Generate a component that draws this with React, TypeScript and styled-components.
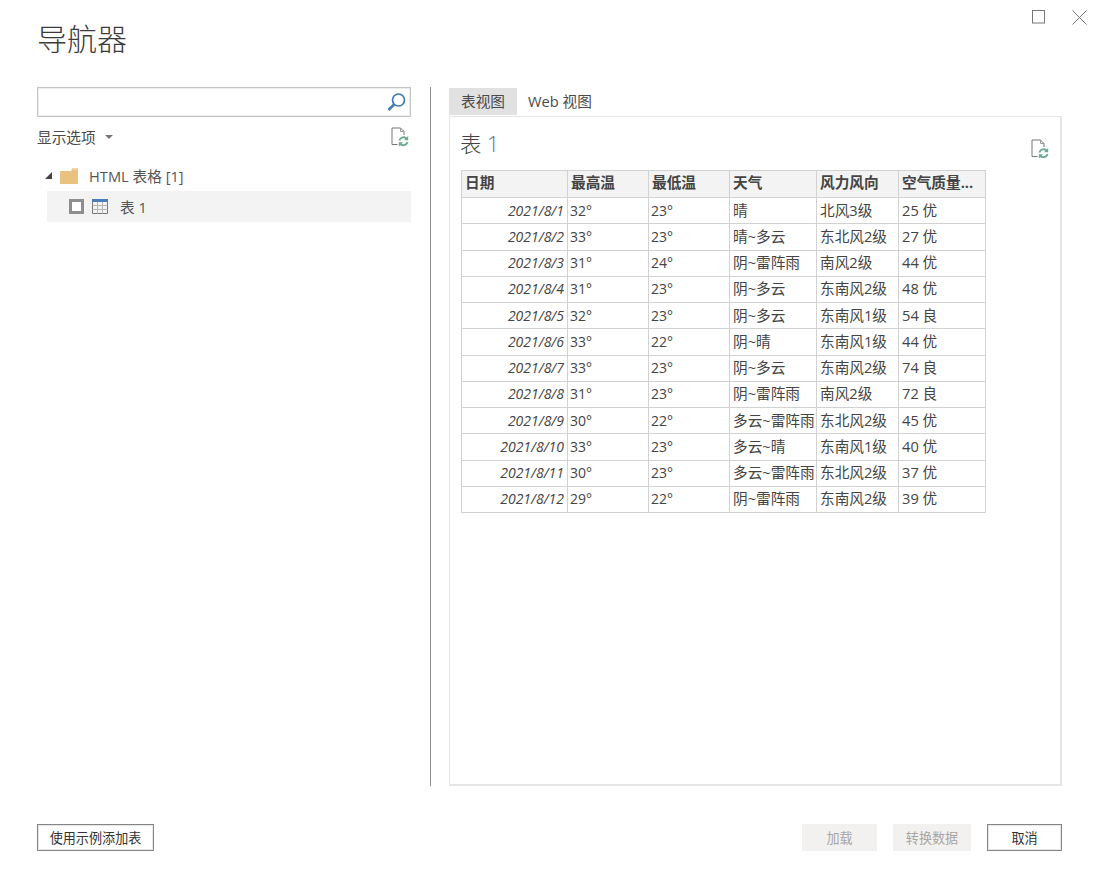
import styled, { createGlobalStyle } from "styled-components";

const GlobalStyle = createGlobalStyle`
  html, body {
    margin: 0;
    padding: 0;
    background: #fff;
  }
  * {
    box-sizing: border-box;
  }
`;

const Page = styled.div`
  width: 1099px;
  height: 874px;
  display: flex;
  flex-direction: column;
  padding: 0 37px 23px 37px;
  background: #fff;
  color: #444;
  font-family: "Open Sans", "Noto Sans CJK SC", sans-serif;
  font-size: 14.67px;
  overflow: hidden;
`;

const Header = styled.header`
  height: 87px;
  margin-right: -25px;
  display: flex;
  justify-content: space-between;
  align-items: flex-start;
`;

const Heading = styled.h1`
  margin: 17px 0 0;
  font-size: 30px;
  line-height: 44px;
  font-weight: 300;
  color: #3c3c3c;
`;

const WindowControls = styled.div`
  display: flex;
  gap: 27px;
  padding-top: 10px;
`;

const Body = styled.div`
  flex: 1;
  display: flex;
  min-height: 0;
`;

const LeftPane = styled.div`
  width: 374px;
  display: flex;
  flex-direction: column;
`;

const Divider = styled.div`
  width: 1px;
  height: 699px;
  margin: 0 18px 0 19px;
  background: #8c8c8c;
`;

const RightPane = styled.div`
  width: 613px;
  height: 699px;
  display: flex;
  flex-direction: column;
`;

const SearchBox = styled.div`
  height: 30px;
  display: flex;
  align-items: center;
  justify-content: flex-end;
  padding-right: 3px;
  border: 1px solid #c4c4c4;
  box-shadow: inset 0 0 0 1px #ececec;
`;

const OptionsRow = styled.div`
  height: 40px;
  display: flex;
  align-items: center;
  justify-content: space-between;
  padding-right: 2px;
`;

const OptionsLabel = styled.span`
  display: flex;
  align-items: center;
  gap: 9px;
  line-height: 20px;
  color: #4a4a4a;
`;

const Caret = styled.i`
  width: 0;
  height: 0;
  border-left: 4px solid transparent;
  border-right: 4px solid transparent;
  border-top: 4px solid #777;
`;

const Tree = styled.div`
  margin-top: 7px;
  margin-left: 10px;
`;

const FolderRow = styled.div`
  height: 27px;
  padding-bottom: 4px;
  display: flex;
  align-items: center;
  color: #555;
`;

const Expander = styled.i`
  width: 0;
  height: 0;
  margin-right: 8px;
  margin-left: -2px;
  border-style: solid;
  border-width: 0 0 7px 7px;
  border-color: transparent transparent #444 transparent;
`;

const FolderLabel = styled.span`
  margin-left: 11px;
  line-height: 20px;
`;

const TableRow = styled.div`
  height: 31px;
  display: flex;
  align-items: center;
  padding-left: 22px;
  background: #f3f3f3;
`;

const CheckBox = styled.i`
  width: 15px;
  height: 15px;
  border: 3px solid #8e8e8e;
  background: #fff;
`;

const TableLabel = styled.span`
  margin-left: 12px;
  line-height: 20px;
  color: #555;
`;

const Tabs = styled.div`
  height: 29px;
  display: flex;
  padding-top: 1px;
`;

const Tab = styled.div<{ $active?: boolean }>`
  height: 27px;
  padding: 0 12px 2px;
  display: flex;
  align-items: center;
  background: ${(props) => (props.$active ? "#e1e1e1" : "transparent")};
  color: #4a4a4a;
  & + & {
    margin-left: -1px;
  }
`;

const Preview = styled.div`
  flex: 1;
  padding: 0 10px;
  border: 2px solid #e6e6e6;
  border-width: 1px 2px 2px 1px;
`;

const PreviewHead = styled.div`
  height: 53px;
  display: flex;
  justify-content: space-between;
  align-items: flex-start;
  padding-right: 1px;
`;

const PreviewTitle = styled.div`
  margin-top: 11px;
  font-size: 21.5px;
  line-height: 32px;
  font-weight: 300;
  color: #444;
`;

const PreviewNumber = styled.span`
  color: #5b6f8d;
`;

const RefreshSlot = styled.div`
  margin-top: 22px;
`;

const Grid = styled.table`
  margin-left: 1px;
  border-collapse: collapse;
  table-layout: fixed;
  width: 524px;
  border: 1px solid #d2d2d2;
`;

const HeadCell = styled.th<{ $w: number }>`
  width: ${(props) => props.$w}px;
  height: 27px;
  padding: 0 2px 5px 3px;
  border: 1px solid #d2d2d2;
  background: #f3f3f3;
  text-align: left;
  font-size: 14.67px;
  font-weight: 700;
  color: #444;
  white-space: nowrap;
  overflow: hidden;
`;

const Cell = styled.td<{ $small?: boolean }>`
  height: 26.25px;
  padding: ${(props) => (props.$small ? "0 3px 0 2px" : "0 3px 2px 3px")};
  border: 1px solid #d2d2d2;
  font-size: ${(props) => (props.$small ? "14px" : "14.67px")};
  line-height: 18px;
  color: #444;
  white-space: nowrap;
  overflow: hidden;
`;

const DateCell = styled(Cell)`
  padding: 0 3px;
  text-align: right;
  font-style: italic;
  font-size: 14px;
`;

const Footer = styled.footer`
  height: 27px;
  margin-top: 38px;
  display: flex;
  justify-content: space-between;
`;

const ActionGroup = styled.div`
  display: flex;
  gap: 16px;
`;

const Button = styled.button<{ $w: number }>`
  width: ${(props) => props.$w}px;
  height: 27px;
  padding: 0;
  background: #fff;
  border: 1px solid #858585;
  box-shadow: inset 0 0 0 1px #e8e8e8;
  font-family: inherit;
  font-size: 13.1px;
  color: #333;
  &:disabled {
    background: #f2f1f0;
    border-color: #f2f1f0;
    box-shadow: none;
    color: #a8a6a4;
  }
`;

const SearchIcon = () => (
  <svg width="20" height="20" viewBox="0 0 20 20" fill="none">
    <circle cx="11.5" cy="8" r="6" stroke="#3f78b4" strokeWidth="1.7" />
    <path d="M7.2 12.4 1.5 18" stroke="#3f78b4" strokeWidth="2.6" />
  </svg>
);

const RefreshDocIcon = () => (
  <svg width="18" height="20" viewBox="0 0 18 20" fill="none">
    <path d="M6.5 17.5H1V1h8.5L13 4.5V8" stroke="#777" strokeWidth="1" />
    <path d="M9.5 1v3.5H13" stroke="#999" strokeWidth="1" />
    <path d="M8.4 13.4a4.4 4.4 0 0 1 7.6-1.6" stroke="#6aa88f" strokeWidth="1.9" />
    <path d="M17.2 9v4.2H13z" fill="#6aa88f" />
    <path d="M16.6 15a4.4 4.4 0 0 1-7.6 1.6" stroke="#6aa88f" strokeWidth="1.9" />
    <path d="M7.8 19.4v-4.2H12z" fill="#6aa88f" />
  </svg>
);

const FolderIcon = () => (
  <svg width="18" height="16" viewBox="0 0 18 16">
    <path d="M0 3h11.5V1.2L13 0h5v16H0z" fill="#e9c27f" />
    <path d="M12.5 1.4 13.4.6H17.4V1.4z" fill="#f7e7c8" />
  </svg>
);

const GridIcon = () => (
  <svg width="16" height="15" viewBox="0 0 16 15" fill="none" style={{ marginLeft: 8 }}>
    <rect x="0" y="0" width="16" height="3" fill="#4a7ebb" />
    <path d="M.5 3v11.5h15V3" stroke="#777" />
    <path d="M.5 6.5h15M.5 10.5h15M5.5 3v11.5M10.5 3v11.5" stroke="#b5b5b5" />
  </svg>
);

const MaximizeIcon = () => (
  <svg width="13" height="14" viewBox="0 0 13 14" fill="none">
    <rect x=".5" y=".5" width="12" height="12.5" stroke="#777" />
  </svg>
);

const CloseIcon = () => (
  <svg width="15" height="15" viewBox="0 0 15 15" fill="none">
    <path d="M.5.5l14 14M14.5.5l-14 14" stroke="#777" />
  </svg>
);

const columns = [
  { title: "日期", width: 106 },
  { title: "最高温", width: 81 },
  { title: "最低温", width: 81 },
  { title: "天气", width: 87 },
  { title: "风力风向", width: 82 },
  { title: "空气质量...", width: 87 },
];

const rows = [
  ["2021/8/1", "32°", "23°", "晴", "北风3级", "25 优"],
  ["2021/8/2", "33°", "23°", "晴~多云", "东北风2级", "27 优"],
  ["2021/8/3", "31°", "24°", "阴~雷阵雨", "南风2级", "44 优"],
  ["2021/8/4", "31°", "23°", "阴~多云", "东南风2级", "48 优"],
  ["2021/8/5", "32°", "23°", "阴~多云", "东南风1级", "54 良"],
  ["2021/8/6", "33°", "22°", "阴~晴", "东南风1级", "44 优"],
  ["2021/8/7", "33°", "23°", "阴~多云", "东南风2级", "74 良"],
  ["2021/8/8", "31°", "23°", "阴~雷阵雨", "南风2级", "72 良"],
  ["2021/8/9", "30°", "22°", "多云~雷阵雨", "东北风2级", "45 优"],
  ["2021/8/10", "33°", "23°", "多云~晴", "东南风1级", "40 优"],
  ["2021/8/11", "30°", "23°", "多云~雷阵雨", "东北风2级", "37 优"],
  ["2021/8/12", "29°", "22°", "阴~雷阵雨", "东南风2级", "39 优"],
];

export default function App() {
  return (
    <Page>
      <GlobalStyle />
      <Header>
        <Heading>导航器</Heading>
        <WindowControls>
          <MaximizeIcon />
          <CloseIcon />
        </WindowControls>
      </Header>
      <Body>
        <LeftPane>
          <SearchBox>
            <SearchIcon />
          </SearchBox>
          <OptionsRow>
            <OptionsLabel>
              显示选项
              <Caret />
            </OptionsLabel>
            <RefreshDocIcon />
          </OptionsRow>
          <Tree>
            <FolderRow>
              <Expander />
              <FolderIcon />
              <FolderLabel>HTML 表格 [1]</FolderLabel>
            </FolderRow>
            <TableRow>
              <CheckBox />
              <GridIcon />
              <TableLabel>表 1</TableLabel>
            </TableRow>
          </Tree>
        </LeftPane>
        <Divider />
        <RightPane>
          <Tabs>
            <Tab $active>表视图</Tab>
            <Tab>Web 视图</Tab>
          </Tabs>
          <Preview>
            <PreviewHead>
              <PreviewTitle>
                表 <PreviewNumber>1</PreviewNumber>
              </PreviewTitle>
              <RefreshSlot>
                <RefreshDocIcon />
              </RefreshSlot>
            </PreviewHead>
            <Grid>
              <thead>
                <tr>
                  {columns.map((col) => (
                    <HeadCell key={col.title} $w={col.width}>
                      {col.title}
                    </HeadCell>
                  ))}
                </tr>
              </thead>
              <tbody>
                {rows.map((row) => (
                  <tr key={row[0]}>
                    <DateCell>{row[0]}</DateCell>
                    {row.slice(1).map((value, i) => (
                      <Cell key={i} $small={i < 2}>
                        {value}
                      </Cell>
                    ))}
                  </tr>
                ))}
              </tbody>
            </Grid>
          </Preview>
        </RightPane>
      </Body>
      <Footer>
        <Button $w={117}>使用示例添加表</Button>
        <ActionGroup>
          <Button $w={75} disabled>
            加载
          </Button>
          <Button $w={78} disabled>
            转换数据
          </Button>
          <Button $w={75}>取消</Button>
        </ActionGroup>
      </Footer>
    </Page>
  );
}
